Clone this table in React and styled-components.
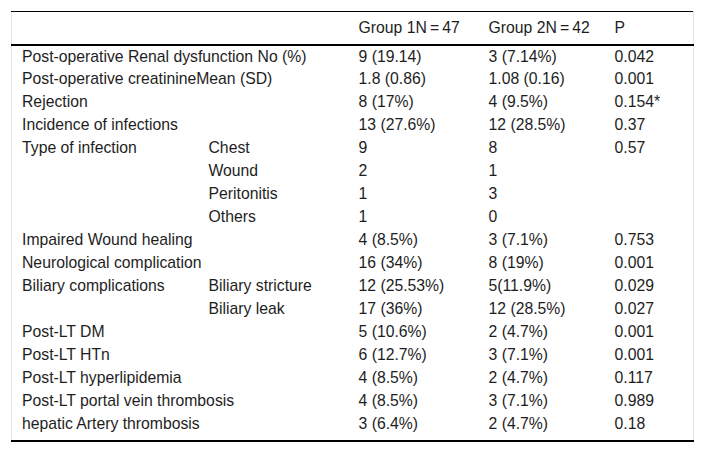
import React from 'react';
import styled, { createGlobalStyle } from 'styled-components';

const GlobalStyle = createGlobalStyle`
  body {
    margin: 0;
    background: #fff;
    font-family: "Liberation Sans", Arial, sans-serif;
  }
`;

const Page = styled.div`
  padding: 11px 11px 0 11px;
`;

const Table = styled.table`
  width: 682px;
  border-collapse: collapse;
  border-left: 1px solid #e4e4e4;
  border-right: 1px solid #e4e4e4;
  border-top: 1px solid #000;
  border-bottom: 2px solid #000;
  font-family: "Liberation Sans", Arial, sans-serif;
  font-size: 15.75px;
  color: #1e1e1e;
  table-layout: fixed;

  col.label { width: 187px; }
  col.sub { width: 150px; }
  col.g1 { width: 130px; }
  col.g2 { width: 126px; }
  col.p { width: 89px; }
`;

const HeadRow = styled.tr`
  height: 33px;
  border-bottom: 2px solid #000;
`;

const Row = styled.tr`
  height: 22.95px;
`;

// last row has a bit of extra room above the bottom rule
const Cell = styled.td`
  padding: ${(p) => (p.$last ? '3px 0 7px 10px' : '1px 0 0 10px')};
  text-align: left;
  vertical-align: middle;
  white-space: nowrap;
  line-height: 18px;
`;

const HeadCell = styled(Cell).attrs({ as: 'th' })`
  font-weight: normal;
`;

const rows = [
  ['Post-operative Renal dysfunction No (%)', null, '9 (19.14)', '3 (7.14%)', '0.042'],
  ['Post-operative creatinineMean (SD)', null, '1.8 (0.86)', '1.08 (0.16)', '0.001'],
  ['Rejection', null, '8 (17%)', '4 (9.5%)', '0.154*'],
  ['Incidence of infections', null, '13 (27.6%)', '12 (28.5%)', '0.37'],
  ['Type of infection', 'Chest', '9', '8', '0.57'],
  ['', 'Wound', '2', '1', ''],
  ['', 'Peritonitis', '1', '3', ''],
  ['', 'Others', '1', '0', ''],
  ['Impaired Wound healing', null, '4 (8.5%)', '3 (7.1%)', '0.753'],
  ['Neurological complication', null, '16 (34%)', '8 (19%)', '0.001'],
  ['Biliary complications', 'Biliary stricture', '12 (25.53%)', '5(11.9%)', '0.029'],
  ['', 'Biliary leak', '17 (36%)', '12 (28.5%)', '0.027'],
  ['Post-LT DM', null, '5 (10.6%)', '2 (4.7%)', '0.001'],
  ['Post-LT HTn', null, '6 (12.7%)', '3 (7.1%)', '0.001'],
  ['Post-LT hyperlipidemia', null, '4 (8.5%)', '2 (4.7%)', '0.117'],
  ['Post-LT portal vein thrombosis', null, '4 (8.5%)', '3 (7.1%)', '0.989'],
  ['hepatic Artery thrombosis', null, '3 (6.4%)', '2 (4.7%)', '0.18'],
];

const App = () => {
  return (
    <Page>
      <GlobalStyle />
      <Table>
        <colgroup>
          <col className="label" />
          <col className="sub" />
          <col className="g1" />
          <col className="g2" />
          <col className="p" />
        </colgroup>
        <thead>
          <HeadRow>
            <HeadCell colSpan={2} />
            <HeadCell>Group 1N&#8201;=&#8201;47</HeadCell>
            <HeadCell>Group 2N&#8201;=&#8201;42</HeadCell>
            <HeadCell>P</HeadCell>
          </HeadRow>
        </thead>
        <tbody>
          {rows.map((r, i) => {
            const last = i === rows.length - 1;
            return (
              <Row key={i}>
                {r[1] === null ? (
                  <Cell colSpan={2} $last={last}>{r[0]}</Cell>
                ) : (
                  <>
                    <Cell $last={last}>{r[0]}</Cell>
                    <Cell $last={last}>{r[1]}</Cell>
                  </>
                )}
                <Cell $last={last}>{r[2]}</Cell>
                <Cell $last={last}>{r[3]}</Cell>
                <Cell $last={last}>{r[4]}</Cell>
              </Row>
            );
          })}
        </tbody>
      </Table>
    </Page>
  );
};

export default App;
